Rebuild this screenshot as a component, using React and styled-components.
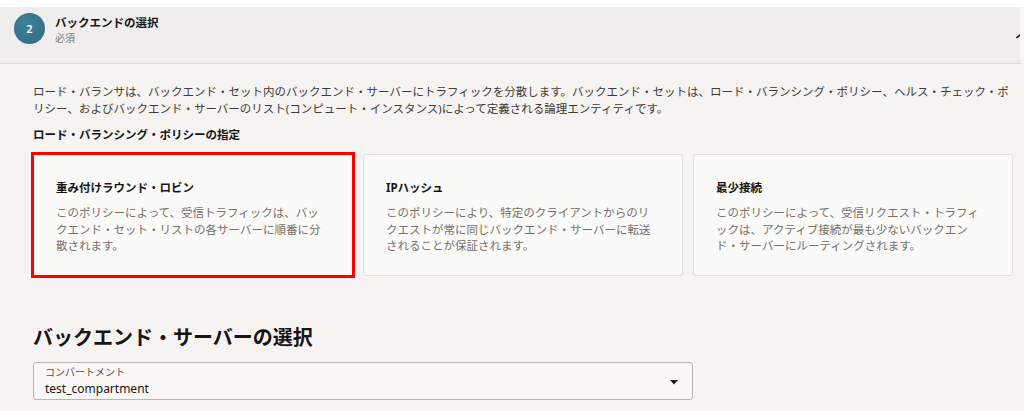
import styled, { createGlobalStyle } from "styled-components";

const GlobalStyle = createGlobalStyle`
  html, body {
    margin: 0;
    padding: 0;
    overflow: hidden;
    background: #ffffff;
  }
  body {
    font-family: "Noto Sans", "Noto Sans CJK JP", sans-serif;
    color: #161513;
  }
`;

const Page = styled.div`
  padding-top: 7px;
  background: #ffffff;
  min-height: 411px;
  box-sizing: border-box;
  display: flex;
  flex-direction: column;
`;

const Header = styled.div`
  display: flex;
  align-items: flex-start;
  gap: 10px;
  height: 50px;
  padding: 6px 0 0 14px;
  background: #efeeec;
  border-bottom: 1px solid #dcd9d5;
  border-right: 4px solid #f7f6f5;
`;

const StepBadge = styled.div`
  flex: none;
  width: 31px;
  height: 31px;
  border-radius: 50%;
  background: radial-gradient(circle at 40% 35%, #3f8197 0%, #357389 60%, #2f6a7f 100%);
  color: #ffffff;
  font-size: 11px;
  font-weight: 600;
  display: flex;
  align-items: center;
  justify-content: center;
`;

const HeaderText = styled.div`
  flex: 1;
  display: flex;
  flex-direction: column;
  padding-top: 2px;
`;

const HeaderTitle = styled.div`
  font-size: 11.5px;
  line-height: 16px;
  font-weight: 700;
  color: #161513;
`;

const HeaderSub = styled.div`
  font-size: 10px;
  line-height: 14px;
  color: #7a7672;
`;

const Chevron = styled.svg`
  flex: none;
  margin-top: 21px;
`;

const Content = styled.div`
  flex: 1;
  background: #f5f4f2;
  padding: 19px 11px 0 33px;
`;

const Description = styled.p`
  margin: 0;
  width: 980px;
  font-size: 11.5px;
  line-height: 17px;
  color: #3d3a37;
`;

const SubHeading = styled.div`
  margin-top: 9px;
  font-size: 11.5px;
  line-height: 17px;
  font-weight: 700;
  color: #161513;
`;

const CardGrid = styled.div`
  margin-top: 11px;
  display: grid;
  grid-template-columns: repeat(3, 320px);
  gap: 10px;
`;

const Card = styled.div`
  height: 122px;
  box-sizing: border-box;
  padding: 25px 22px 0 22px;
  background: #fafaf9;
  border: 1px solid #e2e0dd;
  border-radius: ${({ $selected }) => ($selected ? "0" : "3px")};
  outline: ${({ $selected }) => ($selected ? "3px solid #ff0000" : "none")};
  outline-offset: -1px;
`;

const CardTitle = styled.div`
  font-size: 11.5px;
  line-height: 16px;
  font-weight: 700;
  color: #161513;
`;

const CardText = styled.div`
  margin-top: 9px;
  width: 270px;
  font-size: 11.5px;
  line-height: 16.5px;
  color: #75716c;
`;

const SectionTitle = styled.h2`
  margin: 49px 0 0 0;
  font-size: 20px;
  line-height: 26px;
  font-weight: 700;
  color: #161513;
`;

const Select = styled.div`
  margin-top: 11px;
  width: 660px;
  height: 38px;
  box-sizing: border-box;
  padding: 3px 14px 0 11px;
  background: #f9f8f7;
  border: 1px solid #b8b5b1;
  border-radius: 3px;
  display: flex;
  align-items: center;
`;

const SelectValue = styled.div`
  flex: 1;
  display: flex;
  flex-direction: column;
  align-self: flex-start;
`;

const SelectLabel = styled.div`
  font-size: 10px;
  line-height: 12px;
  color: #514e4a;
`;

const SelectText = styled.div`
  margin-top: 3px;
  font-size: 12px;
  line-height: 16px;
  color: #161513;
`;

const policies = [
  {
    title: "重み付けラウンド・ロビン",
    text: "このポリシーによって、受信トラフィックは、バックエンド・セット・リストの各サーバーに順番に分散されます。",
    selected: true,
  },
  {
    title: "IPハッシュ",
    text: "このポリシーにより、特定のクライアントからのリクエストが常に同じバックエンド・サーバーに転送されることが保証されます。",
  },
  {
    title: "最少接続",
    text: "このポリシーによって、受信リクエスト・トラフィックは、アクティブ接続が最も少ないバックエンド・サーバーにルーティングされます。",
  },
];

export default function App() {
  return (
    <>
      <GlobalStyle />
      <Page>
        <Header>
          <StepBadge>2</StepBadge>
          <HeaderText>
            <HeaderTitle>バックエンドの選択</HeaderTitle>
            <HeaderSub>必須</HeaderSub>
          </HeaderText>
          {/* chevron is cut by the right edge of the panel */}
          <Chevron width="4" height="5" viewBox="0 0 4 5">
            <path d="M0.5 4 L4 0.8" fill="none" stroke="#161513" strokeWidth="1.6" />
          </Chevron>
        </Header>
        <Content>
          <Description>
            ロード・バランサは、バックエンド・セット内のバックエンド・サーバーにトラフィックを分散します。バックエンド・セットは、ロード・バランシング・ポリシー、ヘルス・チェック・ポリシー、およびバックエンド・サーバーのリスト(コンピュート・インスタンス)によって定義される論理エンティティです。
          </Description>
          <SubHeading>ロード・バランシング・ポリシーの指定</SubHeading>
          <CardGrid>
            {policies.map((p) => (
              <Card key={p.title} $selected={p.selected}>
                <CardTitle>{p.title}</CardTitle>
                <CardText>{p.text}</CardText>
              </Card>
            ))}
          </CardGrid>
          <SectionTitle>バックエンド・サーバーの選択</SectionTitle>
          <Select>
            <SelectValue>
              <SelectLabel>コンパートメント</SelectLabel>
              <SelectText>test_compartment</SelectText>
            </SelectValue>
            <svg width="8" height="5" viewBox="0 0 8 5">
              <path d="M0 0 L8 0 L4 4.5 Z" fill="#161513" />
            </svg>
          </Select>
        </Content>
      </Page>
    </>
  );
}
